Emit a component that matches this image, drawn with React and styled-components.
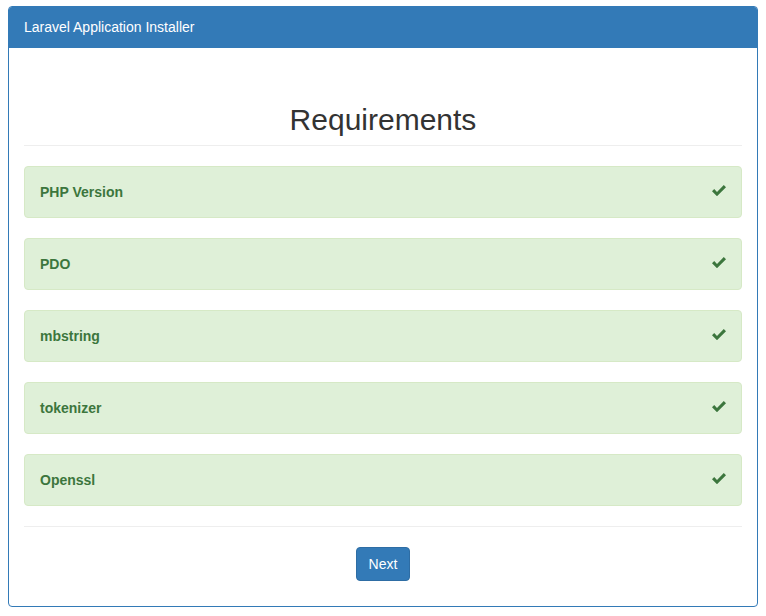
import React from "react";
import styled, { createGlobalStyle } from "styled-components";

const Global = createGlobalStyle`
  * { box-sizing: border-box; }
  body {
    margin: 6px 8px 8px;
    font-family: "Liberation Sans", Arial, Helvetica, sans-serif;
    font-size: 14px;
    line-height: 20px;
    color: #333;
    background: #fff;
  }
`;

const Panel = styled.div`
  border: 1px solid #337ab7;
  border-radius: 4px;
  background: #fff;
`;

const PanelHeading = styled.div`
  background: #337ab7;
  color: #fff;
  padding: 10px 15px;
  border-bottom: 1px solid #337ab7;
  border-radius: 3px 3px 0 0;
  font-size: 14px;
  line-height: 20px;
`;

const PanelBody = styled.div`
  padding: 15px 15px 25px;
`;

const Title = styled.h1`
  margin: 40px 0 20px;
  padding-bottom: 9px;
  border-bottom: 1px solid #eee;
  font-size: 30px;
  line-height: 33px;
  font-weight: 400;
  text-align: center;
  color: #333;
`;

const Alert = styled.div`
  display: flex;
  justify-content: space-between;
  align-items: flex-start;
  padding: 15px;
  margin-bottom: 20px;
  border: 1px solid #d6e9c6;
  border-radius: 4px;
  background: #dff0d8;
  color: #3c763d;
  font-weight: 700;
  line-height: 20px;
`;

const Check = styled.svg`
  display: block;
  width: 14px;
  height: 11px;
  margin-top: 3px;
  fill: #3c763d;
`;

const Rule = styled.hr`
  margin: 20px 0;
  border: 0;
  border-top: 1px solid #eee;
`;

const Actions = styled.div`
  display: flex;
  justify-content: center;
`;

const Button = styled.button`
  font-family: inherit;
  font-size: 14px;
  line-height: 20px;
  padding: 6px 12px;
  color: #fff;
  background: #337ab7;
  border: 1px solid #2e6da4;
  border-radius: 4px;
  cursor: pointer;
`;

const items = ["PHP Version", "PDO", "mbstring", "tokenizer", "Openssl"];

export default function App() {
  return (
    <>
      <Global />
      <Panel>
        <PanelHeading>Laravel Application Installer</PanelHeading>
        <PanelBody>
          <Title>Requirements</Title>
          {items.map((it) => (
            <Alert key={it}>
              <span>{it}</span>
              <Check viewBox="0 0 14 11">
                <polygon points="0,6.3 2.2,4.1 5,6.9 11.8,0.1 14,2.3 5,11.2" />
              </Check>
            </Alert>
          ))}
          <Rule />
          <Actions>
            <Button>Next</Button>
          </Actions>
        </PanelBody>
      </Panel>
    </>
  );
}
